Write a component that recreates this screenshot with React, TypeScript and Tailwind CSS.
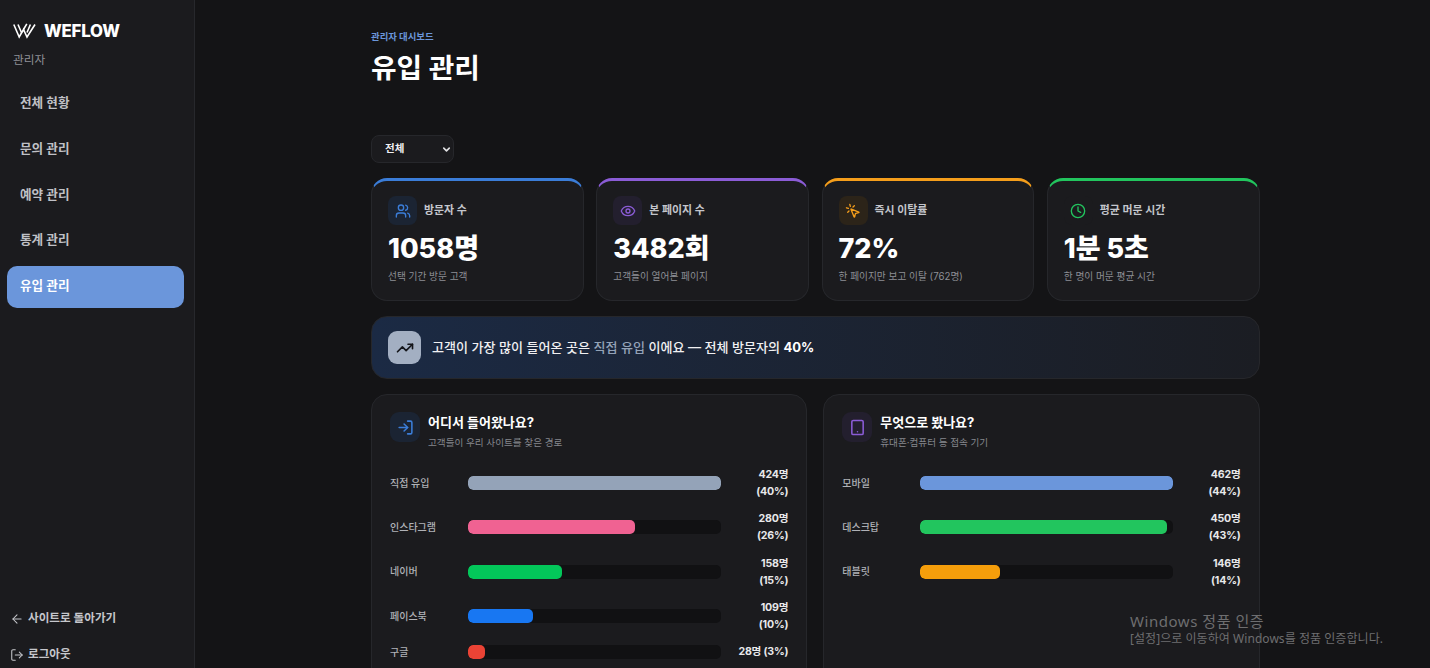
import React from "react";
import { Users, Eye, MousePointerClick, Clock, TrendingUp, LogIn, Tablet, ArrowLeft, LogOut, ChevronDown } from "lucide-react";

const font = "font-['Inter','Noto_Sans_CJK_KR',sans-serif]";

const nav = ["전체 현황", "문의 관리", "예약 관리", "통계 관리", "유입 관리"];

const stats = [
  { label: "방문자 수", value: "1058명", sub: "선택 기간 방문 고객", Icon: Users, border: "border-t-[#3b7dd8]", bg: "bg-[#1b2433]", color: "text-[#3b7dd8]" },
  { label: "본 페이지 수", value: "3482회", sub: "고객들이 열어본 페이지", Icon: Eye, border: "border-t-[#8b5cd6]", bg: "bg-[#231f2e]", color: "text-[#8b5cd6]" },
  { label: "즉시 이탈률", value: "72%", sub: "한 페이지만 보고 이탈 (762명)", Icon: MousePointerClick, border: "border-t-[#f59e1b]", bg: "bg-[#2c2419]", color: "text-[#f59e1b]" },
  { label: "평균 머문 시간", value: "1분 5초", sub: "한 명이 머문 평균 시간", Icon: Clock, border: "border-t-[#22c55e]", bg: "bg-[#1b1b1e]", color: "text-[#22c55e]" },
];

type Row = { label: string; count: string; pct: string; w: string; color: string };

const sources: Row[] = [
  { label: "직접 유입", count: "424명", pct: "(40%)", w: "w-full", color: "bg-[#94a3b8]" },
  { label: "인스타그램", count: "280명", pct: "(26%)", w: "w-[66%]", color: "bg-[#f06292]" },
  { label: "네이버", count: "158명", pct: "(15%)", w: "w-[37%]", color: "bg-[#03c75a]" },
  { label: "페이스북", count: "109명", pct: "(10%)", w: "w-[25.7%]", color: "bg-[#1877f2]" },
];

const devices: Row[] = [
  { label: "모바일", count: "462명", pct: "(44%)", w: "w-full", color: "bg-[#6b96db]" },
  { label: "데스크탑", count: "450명", pct: "(43%)", w: "w-[97.4%]", color: "bg-[#22c55e]" },
  { label: "태블릿", count: "146명", pct: "(14%)", w: "w-[31.6%]", color: "bg-[#f59e0b]" },
];

function BarRow({ r }: { r: Row }) {
  return (
    <div className="flex h-[44.3px] items-center">
      <div className="w-[78px] shrink-0 text-[10px] font-medium text-[#b0b2b7]">{r.label}</div>
      <div className="h-[14px] w-[253px] shrink-0 overflow-hidden rounded-[5px] bg-[#111113]">
        <div className={`h-full rounded-[5px] ${r.w} ${r.color}`} />
      </div>
      <div className="flex-1 text-right text-[10.6px] font-bold leading-[17px] tracking-[-0.2px] text-[#e8e8ea]">
        <div>{r.count}</div>
        <div>{r.pct}</div>
      </div>
    </div>
  );
}

function Panel({ Icon, iconBg, iconColor, title, sub, children }: { Icon: typeof Users; iconBg: string; iconColor: string; title: string; sub: string; children: React.ReactNode }) {
  return (
    <div className="h-[320px] flex-1 rounded-2xl border border-[#26272b] bg-[#1b1b1e] px-[18px] pt-[16px]">
      <div className="mb-[8px] flex items-start gap-[8px]">
        <div className={`mt-px flex h-[30px] w-[30px] items-center justify-center rounded-[9px] ${iconBg}`}>
          <Icon className={`h-[17px] w-[17px] ${iconColor}`} strokeWidth={2.2} />
        </div>
        <div>
          <div className="text-[13px] font-bold leading-[22px] text-white">{title}</div>
          <div className="text-[9.6px] leading-[20px] text-[#85878d]">{sub}</div>
        </div>
      </div>
      {children}
    </div>
  );
}

export default function App() {
  return (
    <div className={`relative flex h-screen w-full overflow-hidden bg-[#141416] ${font}`}>
      <aside className="flex h-[678px] w-[195px] shrink-0 flex-col border-r border-[#27282c] bg-[#1b1b1e]">
        <div className="px-[13px] pt-[20px]">
          <div className="flex h-[22px] items-center gap-[8px]">
            <svg width="23" height="16" viewBox="0 0 23 16" fill="none" stroke="white" strokeWidth="1.6" strokeLinejoin="miter">
              <path d="M0.8 1.5 L6.2 14 L10.5 6.5 L14 14 L22 1.5" />
              <path d="M5 1.5 L8.6 9.8 M10.5 6.5 L13.8 0.8 M14 9.5 L17.4 1.5" />
            </svg>
            <span className="text-[16.8px] font-extrabold leading-none tracking-[-0.2px] text-white">WEFLOW</span>
          </div>
          <div className="mt-[9px] text-[11.7px] leading-[18px] text-[#8f9096]">관리자</div>
        </div>
        <nav className="mt-[13.5px] flex flex-col gap-[3.75px] pl-[7px] pr-[10px]">
          {nav.map((n, i) => (
            <div key={n} className={`flex h-[42px] items-center rounded-[10px] px-[13px] text-[12.6px] font-semibold ${i === 4 ? "bg-[#6b96db] text-white" : "text-[#c0c1c6]"}`}>
              {n}
            </div>
          ))}
        </nav>
        <div className="mt-auto flex flex-col px-[9.5px] pb-[5px]">
          <div className="flex h-[36px] items-center gap-[4.5px] text-[11.6px] font-semibold text-[#c6c7cc]">
            <ArrowLeft className="h-[14px] w-[14px]" strokeWidth={1.8} />
            사이트로 돌아가기
          </div>
          <div className="flex h-[36px] items-center gap-[4.5px] text-[11.6px] font-semibold text-[#c6c7cc]">
            <LogOut className="h-[14px] w-[14px]" strokeWidth={1.8} />
            로그아웃
          </div>
        </div>
      </aside>

      <main className="flex-1 pl-[176px] pt-[29px]">
        <div className="w-[888.5px]">
          <div className="text-[9.4px] font-bold leading-[16px] text-[#6b96db]">관리자 대시보드</div>
          <h1 className="mt-[2px] text-[27.8px] font-bold leading-[42px] text-white">유입 관리</h1>

          <div className="mt-[46px] flex h-[28px] w-[83px] items-center justify-between rounded-[8px] border border-[#26272b] bg-[#1b1b1e] pl-[13px] pr-[1px]">
            <span className="text-[10.5px] font-bold text-[#f0f0f2]">전체</span>
            <ChevronDown className="h-[11px] w-[11px] text-[#e0e0e2]" strokeWidth={3.5} />
          </div>

          <div className="mt-[15px] grid grid-cols-4 gap-[12.5px]">
            {stats.map((s) => (
              <div key={s.label} className={`h-[123px] rounded-[16px] border border-[#26272b] border-t-[3px] bg-[#1b1b1e] px-[16px] pt-[15px] ${s.border}`}>
                <div className="flex items-center gap-[7px]">
                  <div className={`flex h-[29px] w-[29px] items-center justify-center rounded-[8px] ${s.bg}`}>
                    <s.Icon className={`h-[16px] w-[16px] ${s.color}`} strokeWidth={2} />
                  </div>
                  <span className="text-[10.9px] font-semibold text-[#c4c6cc]">{s.label}</span>
                </div>
                <div className="mt-[7px] text-[27px] font-extrabold leading-[34px] text-white">{s.value}</div>
                <div className="mt-[3px] text-[9.7px] leading-[16px] text-[#8d8f95]">{s.sub}</div>
              </div>
            ))}
          </div>

          <div className="mt-[15px] flex h-[63px] items-center gap-[11px] rounded-2xl border border-[#26272b] bg-gradient-to-r from-[#1b2a44] to-[#1b1d23] px-[16px]">
            <div className="flex h-[33px] w-[33px] items-center justify-center rounded-[9px] bg-[#a3afc2]">
              <TrendingUp className="h-[18px] w-[18px] text-[#14151a]" strokeWidth={2.2} />
            </div>
            <p className="text-[13.06px] font-medium text-[#f0f0f2]">
              고객이 가장 많이 들어온 곳은 <span className="text-[#94a3b8]">직접 유입</span> 이에요 — 전체 방문자의 <b className="font-bold text-white">40%</b>
            </p>
          </div>

          <div className="mt-[15px] flex gap-[16px]">
            <Panel Icon={LogIn} iconBg="bg-[#1b2433]" iconColor="text-[#3b7dd8]" title="어디서 들어왔나요?" sub="고객들이 우리 사이트를 찾은 경로">
              {sources.map((r) => <BarRow key={r.label} r={r} />)}
              <div className="flex h-[28px] items-center">
                <div className="w-[78px] shrink-0 text-[10px] font-medium text-[#b0b2b7]">구글</div>
                <div className="h-[14px] w-[253px] shrink-0 overflow-hidden rounded-[5px] bg-[#111113]">
                  <div className="h-full w-[6.6%] rounded-[5px] bg-[#ea4335]" />
                </div>
                <div className="flex-1 text-right text-[10.6px] font-bold tracking-[-0.2px] text-[#e8e8ea]">28명 (3%)</div>
              </div>
            </Panel>
            <Panel Icon={Tablet} iconBg="bg-[#231f2e]" iconColor="text-[#8b5cd6]" title="무엇으로 봤나요?" sub="휴대폰·컴퓨터 등 접속 기기">
              {devices.map((r) => <BarRow key={r.label} r={r} />)}
            </Panel>
          </div>
        </div>
      </main>

      <div className="pointer-events-none absolute left-[1130px] top-[611px] text-[#6e6e70]">
        <div className="text-[15px] font-['Noto_Sans','Noto_Sans_CJK_KR',sans-serif] leading-[20px] tracking-[0.55px]">Windows 정품 인증</div>
        <div className="text-[12px] font-['Noto_Sans','Noto_Sans_CJK_KR',sans-serif] leading-[16px] tracking-[0.05px]">[설정]으로 이동하여 Windows를 정품 인증합니다.</div>
      </div>
    </div>
  );
}
